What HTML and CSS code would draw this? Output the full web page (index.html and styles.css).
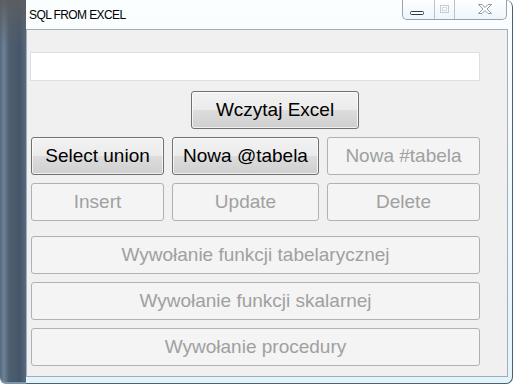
FILE: index.html
```html
<!DOCTYPE html>
<html lang="pl">
<head>
<meta charset="UTF-8">
<meta name="viewport" content="width=device-width, initial-scale=1.0">
<title>SQL FROM EXCEL</title>
<link rel="stylesheet" href="styles.css">
</head>
<body>
<div class="window">
    <div class="frame-left"></div>
    <div class="frame">
        <div class="titlebar">
            <span class="title">SQL FROM EXCEL</span>
            <div class="caption-buttons">
                <span class="cap cap-min">
                    <svg width="31" height="19" viewBox="0 0 31 19"><rect x="7.5" y="11.5" width="13" height="3" rx="1" fill="#fff" stroke="#2b3a4e"/></svg>
                </span>
                <span class="cap cap-max">
                    <svg width="19" height="19" viewBox="0 0 19 19"><rect x="5.5" y="5.5" width="8" height="7" fill="none" stroke="#c4ccd4"/><rect x="7.5" y="7.5" width="4" height="3" fill="none" stroke="#d6dce2"/></svg>
                </span>
                <span class="cap cap-close">
                    <svg width="51" height="19" viewBox="0 0 51 19"><polygon points="23.5,4.5 27,4.5 30,7.5 33,4.5 36.5,4.5 32,9 36.5,13.5 33,13.5 30,10.5 27,13.5 23.5,13.5 28,9" fill="#fff" stroke="#8e9aa6"/></svg>
                </span>
            </div>
        </div>
        <div class="client">
            <div class="content">
                <input class="path-box" type="text">
                <button class="btn btn-load">Wczytaj Excel</button>
                <div class="row-three">
                    <button class="btn">Select union</button>
                    <button class="btn">Nowa @tabela</button>
                    <button class="btn" disabled>Nowa #tabela</button>
                </div>
                <div class="row-three">
                    <button class="btn" disabled>Insert</button>
                    <button class="btn" disabled>Update</button>
                    <button class="btn" disabled>Delete</button>
                </div>
                <div class="wide-list">
                    <button class="btn" disabled>Wywołanie funkcji tabelarycznej</button>
                    <button class="btn" disabled>Wywołanie funkcji skalarnej</button>
                    <button class="btn" disabled>Wywołanie procedury</button>
                </div>
            </div>
        </div>
    </div>
</div>
</body>
</html>
```

FILE: styles.css
```css
body {
    margin: 0;
    background: #fff;
    font-family: "Liberation Sans", Arial, sans-serif;
}
.window {
    display: flex;
    width: 513px;
    height: 384px;
}
.frame-left {
    width: 26px;
    border-radius: 0 0 0 6px;
    background:
        linear-gradient(to bottom, rgba(92, 94, 98, 0.95) 0, rgba(92, 94, 98, 0) 45px),
        linear-gradient(to right, #56687c 0, #6c8298 4px, #4f5f71 9px, #46566a 20px, #5a6a7d 26px);
    box-shadow: inset 0 -2px 0 #7d95ab;
}
.frame {
    flex: 1;
    display: flex;
    flex-direction: column;
    background: linear-gradient(#fbfeff, #e2f4fb);
    border-right: 1px solid #4f5f70;
    border-bottom: 1px solid #4f5f70;
    border-radius: 0 7px 7px 0;
    padding-bottom: 6px;
}
.titlebar {
    height: 29px;
    display: flex;
    align-items: flex-start;
}
.title {
    padding: 8px 0 0 3px;
    font-size: 12px;
    letter-spacing: -0.6px;
    color: #000;
}
.caption-buttons {
    margin-left: auto;
    margin-right: 5px;
    display: flex;
    height: 19px;
    border: 1px solid #97a3ae;
    border-top: none;
    border-radius: 0 0 5px 5px;
    background: linear-gradient(#fdfeff, #eef6fa);
}
.cap {
    display: block;
    height: 19px;
}
.cap svg {
    display: block;
}
.cap-max,
.cap-close {
    border-left: 1px solid #b9c3cc;
}
.client {
    flex: 1;
    margin-right: 4px;
    background: #f0f0f0;
    border: 1px solid #a2adb7;
}
.content {
    width: 449px;
    margin-left: 4px;
    padding-top: 22px;
    display: flex;
    flex-direction: column;
}
.path-box {
    box-sizing: border-box;
    width: 450px;
    height: 29px;
    margin: 0 0 10px -1px;
    border: 1px solid #dcdfe3;
    background: #fff;
    padding: 0;
}
.btn {
    box-sizing: border-box;
    height: 38px;
    padding: 0;
    border: 1px solid #707070;
    border-radius: 3px;
    background: linear-gradient(#f2f2f2 0, #ebebeb 50%, #dddddd 50%, #cfcfcf 100%);
    box-shadow: inset 0 0 0 1px rgba(255, 255, 255, 0.7);
    font-family: "Liberation Sans", Arial, sans-serif;
    font-size: 19px;
    color: #000;
}
.btn:disabled {
    border-color: #adb2b5;
    background: #f4f4f4;
    box-shadow: none;
    color: #a0a0a0;
}
.btn-load {
    width: 168px;
    margin: 0 0 8px 160px;
}
.row-three {
    display: grid;
    grid-template-columns: 133px 147px 153px;
    column-gap: 8px;
    margin-bottom: 8px;
}
.wide-list {
    display: flex;
    flex-direction: column;
    gap: 8px;
    margin-top: 7px;
}
```
